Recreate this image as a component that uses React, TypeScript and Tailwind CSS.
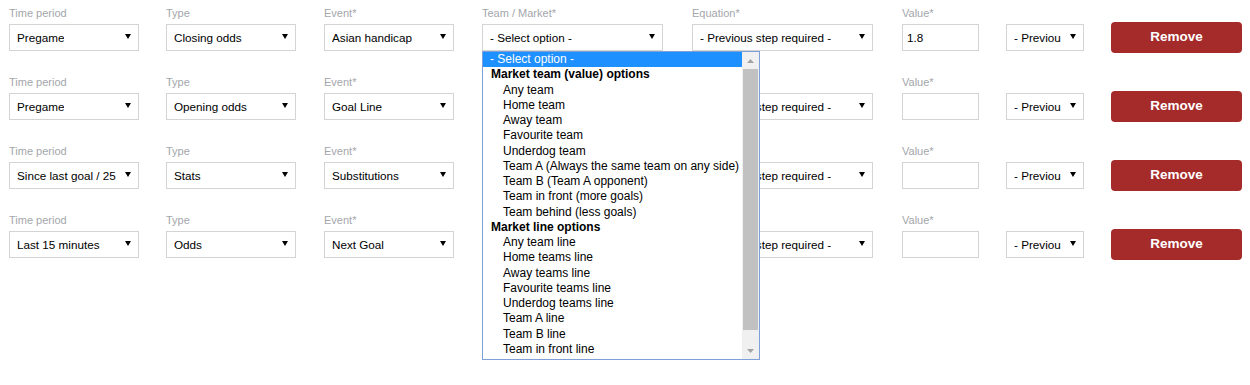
import React from "react";

type Row = {
  period: string;
  type: string;
  event: string;
  team: string;
  equation: string;
  value: string;
  prev: string;
};

const rows: Row[] = [
  { period: "Pregame", type: "Closing odds", event: "Asian handicap", team: "- Select option -", equation: "- Previous step required -", value: "1.8", prev: "- Previous step required -" },
  { period: "Pregame", type: "Opening odds", event: "Goal Line", team: "- Select option -", equation: "- Previous step required -", value: "", prev: "- Previous step required -" },
  { period: "Since last goal / 25 minutes", type: "Stats", event: "Substitutions", team: "- Select option -", equation: "- Previous step required -", value: "", prev: "- Previous step required -" },
  { period: "Last 15 minutes", type: "Odds", event: "Next Goal", team: "- Select option -", equation: "- Previous step required -", value: "", prev: "- Previous step required -" },
];

function Label({ text, hidden }: { text: string; hidden?: boolean }) {
  return (
    <div className={hidden ? "h-[14px] leading-[14px] text-[11px] text-[#a3a6ab] whitespace-nowrap invisible" : "h-[14px] leading-[14px] text-[11px] text-[#a3a6ab] whitespace-nowrap"}>
      {text}
    </div>
  );
}

function Sel({ text, hideText }: { text: string; hideText?: boolean }) {
  return (
    <div className="relative mt-[4px] h-[27px] w-full border border-[#d4d4d4] bg-white flex items-center pl-[7px] pr-[22px]">
      <span className={hideText ? "block min-w-0 overflow-hidden whitespace-nowrap text-[11.7px] text-black invisible" : "block min-w-0 overflow-hidden whitespace-nowrap text-[11.7px] text-black"}>
        {text}
      </span>
      <svg className="absolute right-[7px] top-[9px]" width="6" height="5" viewBox="0 0 6 5">
        <path d="M0 0H6L3 5Z" fill="#000" />
      </svg>
    </div>
  );
}

function Input({ text }: { text: string }) {
  return (
    <div className="mt-[4px] h-[27px] w-full border border-[#d4d4d4] bg-white flex items-center pl-[4px]">
      <span className="text-[11.7px] text-black">{text}</span>
    </div>
  );
}

const teamOptions = [
  "Any team",
  "Home team",
  "Away team",
  "Favourite team",
  "Underdog team",
  "Team A (Always the same team on any side)",
  "Team B (Team A opponent)",
  "Team in front (more goals)",
  "Team behind (less goals)",
];

const lineOptions = [
  "Any team line",
  "Home teams line",
  "Away teams line",
  "Favourite teams line",
  "Underdog teams line",
  "Team A line",
  "Team B line",
  "Team in front line",
];

function Dropdown() {
  return (
    <div className="absolute left-[482px] top-[51px] w-[278px] h-[309px] border border-[#7f9fd8] bg-white flex overflow-hidden">
      <div className="w-[259px] flex flex-col text-[12px] text-black">
        <div className="h-[15.25px] leading-[15.25px] bg-[#1e90ff] text-white pl-[7px] whitespace-nowrap">- Select option -</div>
        <div className="h-[15.25px] leading-[15.25px] font-bold pl-[8px] whitespace-nowrap">Market team (value) options</div>
        {teamOptions.map((o) => (
          <div key={o} className="h-[15.25px] leading-[15.25px] pl-[20px] whitespace-nowrap">{o}</div>
        ))}
        <div className="h-[15.25px] leading-[15.25px] font-bold pl-[8px] whitespace-nowrap">Market line options</div>
        {lineOptions.map((o) => (
          <div key={o} className="h-[15.25px] leading-[15.25px] pl-[20px] whitespace-nowrap">{o}</div>
        ))}
      </div>
      <div className="w-[17px] h-[307px] bg-[#f0f0f0] flex flex-col">
        <div className="h-[17px] flex items-center justify-center">
          <svg width="7" height="4" viewBox="0 0 7 4">
            <path d="M0 4H7L3.5 0Z" fill="#a3a3a3" />
          </svg>
        </div>
        <div className="h-[261px] mx-[1px] bg-[#c1c1c1]" />
        <div className="flex-1" />
        <div className="h-[17px] flex items-center justify-center">
          <svg width="7" height="4" viewBox="0 0 7 4">
            <path d="M0 0H7L3.5 4Z" fill="#a3a3a3" />
          </svg>
        </div>
      </div>
    </div>
  );
}

export default function App() {
  return (
    <div className="relative w-[1250px] h-[385px] bg-white font-['Liberation_Sans',Arial,sans-serif]">
      <div className="flex flex-col">
        {rows.map((r, i) => {
          const covered = i > 0;
          return (
            <div key={i} className="flex h-[69px] pt-[6px]">
              <div className="ml-[9px] w-[130px] flex flex-col">
                <Label text="Time period" />
                <Sel text={r.period} />
              </div>
              <div className="ml-[27px] w-[130px] flex flex-col">
                <Label text="Type" />
                <Sel text={r.type} />
              </div>
              <div className="ml-[28px] w-[130px] flex flex-col">
                <Label text="Event*" />
                <Sel text={r.event} />
              </div>
              <div className="ml-[28px] w-[181px] flex flex-col">
                <Label text="Team / Market*" hidden={covered} />
                <Sel text={r.team} hideText={covered} />
              </div>
              <div className="ml-[29px] w-[181px] flex flex-col">
                <Label text="Equation*" hidden={covered} />
                <Sel text={r.equation} />
              </div>
              <div className="ml-[29px] w-[77px] flex flex-col">
                <Label text="Value*" />
                <Input text={r.value} />
              </div>
              <div className="ml-[27px] w-[78px] flex flex-col">
                <div className="h-[14px]" />
                <Sel text={r.prev} />
              </div>
              <div className="ml-[27px] w-[131px] flex flex-col">
                <button className="mt-[16px] h-[31px] w-full rounded-[4px] bg-[#a52a2a] text-white font-bold text-[13.5px] flex items-center justify-center">
                  Remove
                </button>
              </div>
            </div>
          );
        })}
      </div>
      <Dropdown />
    </div>
  );
}
